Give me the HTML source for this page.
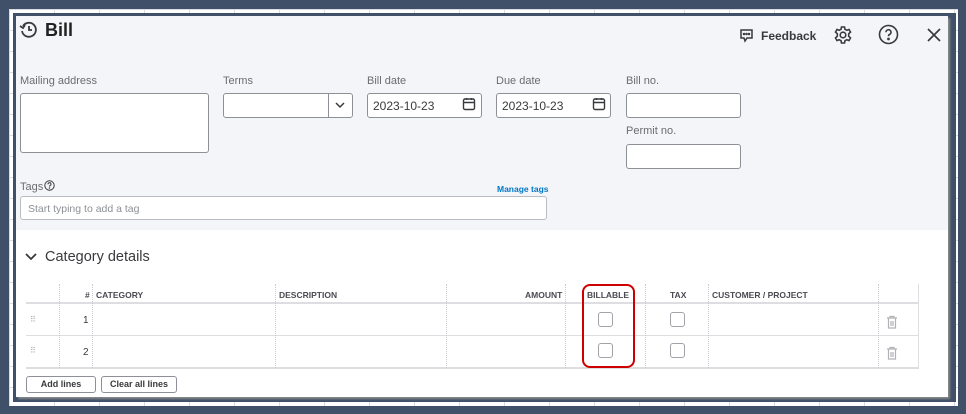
<!DOCTYPE html>
<html><head><meta charset="utf-8"><style>
*{box-sizing:border-box;margin:0;padding:0}
body{width:966px;height:414px;background:#3f5068;position:relative;overflow:hidden;font-family:"Liberation Sans",sans-serif;color:#393a3d}
.abs{position:absolute}
.sheet{left:9px;top:9px;width:949px;height:397px;background:#fff;
background-image:linear-gradient(#d8dbe0 1px,transparent 1px),linear-gradient(90deg,#d8dbe0 1px,transparent 1px);background-size:45px 21px}
.frame{left:13px;top:13px;width:943px;height:389px;background:#3f5068}
.dlg{left:16px;top:16px;width:932px;height:381px;background:#fff;box-shadow:2px 2px 2px #888}
.top{left:16px;top:16px;width:932px;height:214px;background:#f4f5f8}
.lbl{font-size:11px;color:#6b6c72}
.in{background:#fff;border:1px solid #8d9096;border-radius:3px}
.val{font-size:12px;color:#393a3d}
.th{font-size:8.5px;font-weight:bold;color:#4a4b50;top:290px}
.vl{top:284px;width:0;border-left:1px dotted #c9cbd0}
.hl{left:26px;width:893px;height:2px;background:#dcdee2}
.cb{width:15px;height:15px;border:1px solid #a0a3a8;border-radius:3px;background:#fff}
.btn{top:376px;height:17px;border:1px solid #8d9096;border-radius:3px;font-size:9px;font-weight:bold;text-align:center;line-height:15px;background:#fff}
</style></head><body>
<div class="abs sheet"></div>
<div class="abs frame"></div>
<div class="abs dlg"></div>
<div class="abs top"></div>

<svg class="abs" style="left:19px;top:20px" width="20" height="20" viewBox="0 0 20 20" fill="none" stroke="#393a3d" stroke-width="1.8"><path d="M4 6A7 7 0 1 1 3 11"/><path d="M1 6l3 2 2-3"/><path d="M10 6v4h3"/></svg>
<div class="abs" style="left:45px;top:20px;font-size:18px;font-weight:bold;color:#222">Bill</div>

<svg class="abs" style="left:739px;top:28px" width="15" height="15" viewBox="0 0 15 15" fill="none" stroke="#393a3d" stroke-width="1.5"><path d="M2 2h11v8H8l-2 3-1-3H2z"/><circle cx="5" cy="6" r=".5" fill="#393a3d"/><circle cx="7.5" cy="6" r=".5" fill="#393a3d"/><circle cx="10" cy="6" r=".5" fill="#393a3d"/></svg>
<div class="abs" style="left:761px;top:29px;font-size:12px;font-weight:bold;color:#393a3d">Feedback</div>
<svg class="abs" style="left:833px;top:25px" width="20" height="20" viewBox="0 0 20 20" fill="none" stroke="#393a3d" stroke-width="1.6"><path d="M8.5 2h3l.5 2.3 1.8 1 2.2-.8 1.5 2.6-1.8 1.6v2.6l1.8 1.6-1.5 2.6-2.2-.8-1.8 1-.5 2.3h-3l-.5-2.3-1.8-1-2.2.8-1.5-2.6 1.8-1.6V8.7L2.5 7.1 4 4.5l2.2.8 1.8-1z"/><circle cx="10" cy="10" r="2.8"/></svg>
<svg class="abs" style="left:878px;top:24px" width="21" height="21" viewBox="0 0 21 21" fill="none" stroke="#393a3d" stroke-width="1.6"><circle cx="10.5" cy="10.5" r="9"/><path d="M8 8.2a2.5 2.5 0 1 1 3.5 2.3c-.8.4-1 .9-1 1.8"/><circle cx="10.5" cy="15" r=".6" fill="#393a3d"/></svg>
<svg class="abs" style="left:926px;top:27px" width="16" height="16" viewBox="0 0 16 16" stroke="#393a3d" stroke-width="1.7"><path d="M2 2l12 12M14 2L2 14"/></svg>

<div class="abs lbl" style="left:20px;top:75px">Mailing address</div>
<div class="abs in" style="left:20px;top:93px;width:189px;height:60px"></div>
<div class="abs lbl" style="left:223px;top:75px">Terms</div>
<div class="abs in" style="left:223px;top:93px;width:130px;height:25px"></div>
<div class="abs" style="left:328px;top:94px;width:1px;height:23px;background:#8d9096"></div>
<svg class="abs" style="left:334px;top:100px" width="12" height="10" viewBox="0 0 12 10" fill="none" stroke="#393a3d" stroke-width="1.5"><path d="M2 3l4 4 4-4"/></svg>
<div class="abs lbl" style="left:367px;top:75px">Bill date</div>
<div class="abs in" style="left:367px;top:93px;width:115px;height:25px"></div>
<div class="abs val" style="left:373px;top:99px">2023-10-23</div>
<svg class="abs" style="left:462px;top:97px" width="14" height="14" viewBox="0 0 14 14" fill="none" stroke="#393a3d" stroke-width="1.4"><rect x="1.5" y="2" width="11" height="10.5" rx="1.5"/><path d="M1.5 5.5h11M4.5 1v2M9.5 1v2"/></svg>
<div class="abs lbl" style="left:496px;top:75px">Due date</div>
<div class="abs in" style="left:496px;top:93px;width:115px;height:25px"></div>
<div class="abs val" style="left:502px;top:99px">2023-10-23</div>
<svg class="abs" style="left:592px;top:97px" width="14" height="14" viewBox="0 0 14 14" fill="none" stroke="#393a3d" stroke-width="1.4"><rect x="1.5" y="2" width="11" height="10.5" rx="1.5"/><path d="M1.5 5.5h11M4.5 1v2M9.5 1v2"/></svg>
<div class="abs lbl" style="left:626px;top:75px">Bill no.</div>
<div class="abs in" style="left:626px;top:93px;width:115px;height:25px"></div>
<div class="abs lbl" style="left:626px;top:125px">Permit no.</div>
<div class="abs in" style="left:626px;top:144px;width:115px;height:25px"></div>

<div class="abs lbl" style="left:20px;top:181px">Tags</div>
<svg class="abs" style="left:44px;top:180px" width="11" height="11" viewBox="0 0 11 11" fill="none" stroke="#393a3d" stroke-width="1"><circle cx="5.5" cy="5.5" r="4.7"/><path d="M4 4.3a1.5 1.5 0 1 1 2 1.3c-.4.2-.5.5-.5 1"/><circle cx="5.5" cy="8" r=".3"/></svg>
<div class="abs" style="left:497px;top:184px;font-size:8.5px;font-weight:bold;color:#0077c5">Manage tags</div>
<div class="abs in" style="left:20px;top:196px;width:527px;height:24px;border-color:#b9bcc2"></div>
<div class="abs" style="left:28px;top:203px;font-size:10.5px;color:#8d9096">Start typing to add a tag</div>

<svg class="abs" style="left:24px;top:252px" width="14" height="10" viewBox="0 0 14 10" fill="none" stroke="#393a3d" stroke-width="1.8"><path d="M2 2l5 5 5-5"/></svg>
<div class="abs" style="left:45px;top:249px;font-size:14.5px;color:#393a3d">Category details</div>

<div class="abs hl" style="top:302px"></div>
<div class="abs hl" style="top:335px;height:1px"></div>
<div class="abs hl" style="top:367px"></div>
<div class="abs vl" style="left:59px;height:84px"></div>
<div class="abs vl" style="left:92px;height:84px"></div>
<div class="abs vl" style="left:275px;height:84px"></div>
<div class="abs vl" style="left:446px;height:84px"></div>
<div class="abs vl" style="left:565px;height:84px"></div>
<div class="abs vl" style="left:645px;height:84px"></div>
<div class="abs vl" style="left:708px;height:84px"></div>
<div class="abs vl" style="left:878px;height:84px"></div>
<div class="abs" style="left:918px;top:284px;width:1px;height:84px;background:#dcdee2"></div>

<div class="abs th" style="left:85px">#</div>
<div class="abs th" style="left:96px">CATEGORY</div>
<div class="abs th" style="left:279px">DESCRIPTION</div>
<div class="abs th" style="left:525px">AMOUNT</div>
<div class="abs th" style="left:587px">BILLABLE</div>
<div class="abs th" style="left:670px">TAX</div>
<div class="abs th" style="left:712px">CUSTOMER / PROJECT</div>

<div class="abs" style="left:30px;top:315px;font-size:8px;color:#aaa;letter-spacing:-1px">⠿</div>
<div class="abs" style="left:30px;top:346px;font-size:8px;color:#aaa;letter-spacing:-1px">⠿</div>
<div class="abs" style="left:83px;top:315px;font-size:10px">1</div>
<div class="abs" style="left:83px;top:347px;font-size:10px">2</div>
<div class="abs cb" style="left:598px;top:312px"></div>
<div class="abs cb" style="left:598px;top:343px"></div>
<div class="abs cb" style="left:670px;top:312px"></div>
<div class="abs cb" style="left:670px;top:343px"></div>
<svg class="abs" style="left:886px;top:315px" width="12" height="14" viewBox="0 0 12 14" fill="none" stroke="#b0b2b6" stroke-width="1.2"><path d="M1 3h10M4 3V1.5h4V3M2.5 3v10h7V3M5 6v5M7 6v5"/></svg>
<svg class="abs" style="left:886px;top:346px" width="12" height="14" viewBox="0 0 12 14" fill="none" stroke="#b0b2b6" stroke-width="1.2"><path d="M1 3h10M4 3V1.5h4V3M2.5 3v10h7V3M5 6v5M7 6v5"/></svg>

<div class="abs" style="left:582px;top:284px;width:53px;height:84px;border:2px solid #c00;border-radius:8px"></div>

<div class="abs btn" style="left:26px;width:70px">Add lines</div>
<div class="abs btn" style="left:101px;width:76px">Clear all lines</div>
</body></html>
